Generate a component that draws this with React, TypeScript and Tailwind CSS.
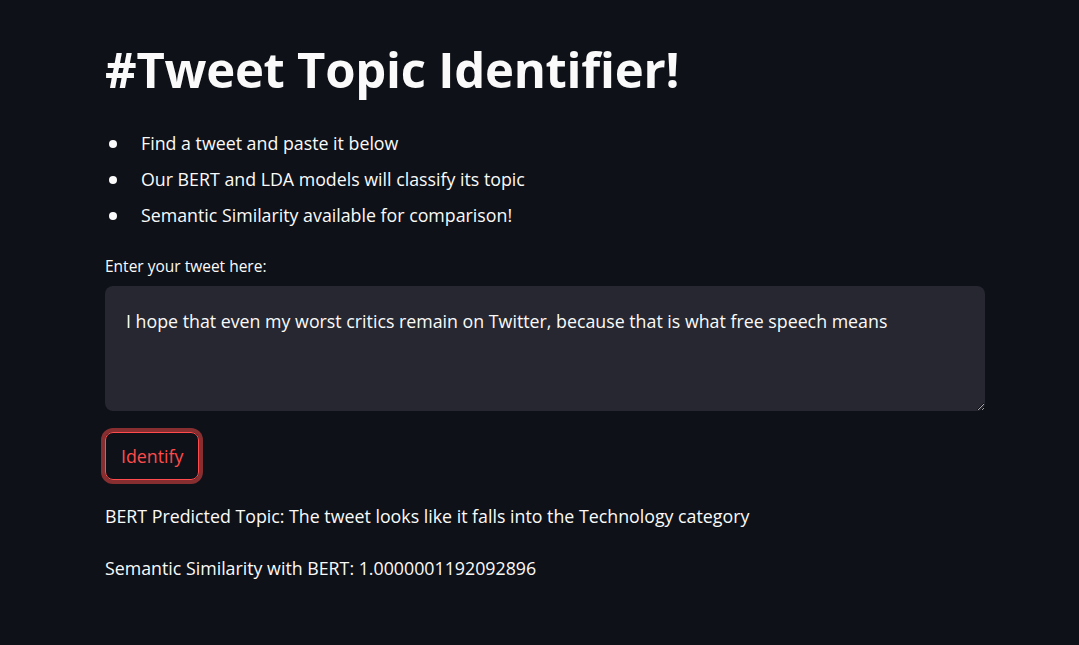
export default function App() {
  return (
    <div
      className="min-h-[645px] w-full bg-[#0e1117] text-[#fafafa]"
      style={{ fontFamily: '"Open Sans", "Noto Sans", sans-serif' }}
    >
      <div className="ml-[105px] w-[880px] pt-[38px]">
        <h1 className="text-[49px] font-bold leading-[62px] tracking-[-0.25px]">#Tweet Topic Identifier!</h1>

        <ul className="mt-[30px] ml-[4px] flex flex-col gap-[9px] text-[17.8px] leading-[27px]">
          {[
            "Find a tweet and paste it below",
            "Our BERT and LDA models will classify its topic",
            "Semantic Similarity available for comparison!",
          ].map((t) => (
            <li key={t} className="flex items-center">
              <span className="mr-[24px] h-[8px] w-[8px] rounded-full bg-[#fafafa]" />
              {t}
            </li>
          ))}
        </ul>

        <label className="mt-[26px] block text-[15.5px] leading-[22px]">Enter your tweet here:</label>
        <textarea
          className="mt-[9px] block h-[125px] w-[880px] resize-y rounded-lg bg-[#262730] px-[21px] pt-[22px] pb-[16px] text-[17.8px] leading-[27px] text-[#fafafa] outline-none"
          defaultValue="I hope that even my worst critics remain on Twitter, because that is what free speech means"
        />

        <button className="mt-[21px] block h-[48px] rounded-lg border border-[#ff4b4b] px-[15px] text-[17.8px] leading-[27px] text-[#ff4b4b] shadow-[0_0_0_4px_rgba(255,75,75,0.5)]">
          Identify
        </button>

        <p className="mt-[23px] text-[17.8px] leading-[27px]">
          BERT Predicted Topic: The tweet looks like it falls into the Technology category
        </p>
        <p className="mt-[25px] text-[17.8px] leading-[27px]">Semantic Similarity with BERT: 1.0000001192092896</p>
      </div>
    </div>
  );
}
